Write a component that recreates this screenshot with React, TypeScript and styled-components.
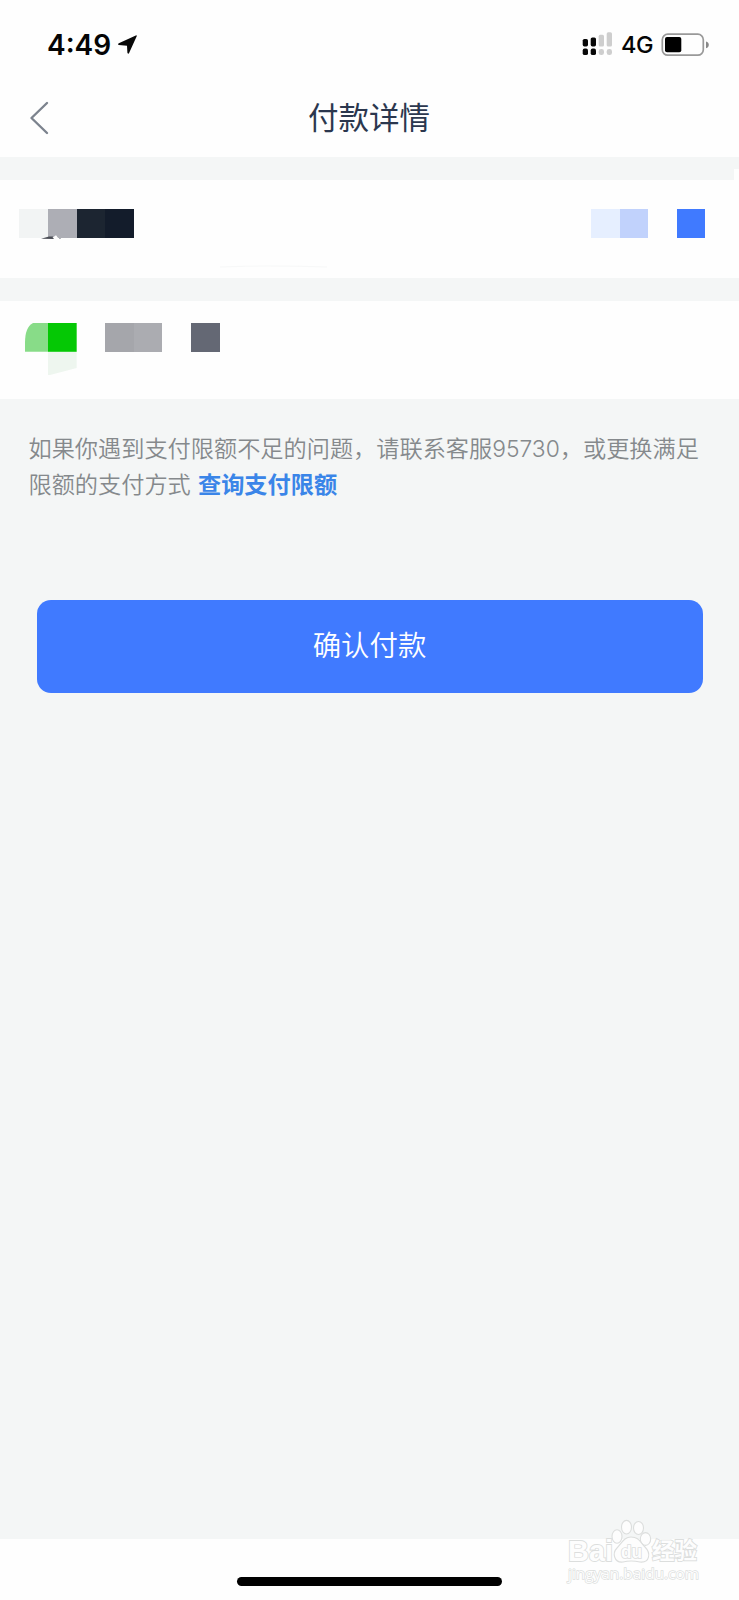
import React from "react";
import styled, { createGlobalStyle } from "styled-components";

const Global = createGlobalStyle`
  * { box-sizing: border-box; }
  body { margin: 0; background: #f4f6f6; }
`;

const cjk = `"Noto Sans CJK SC", sans-serif`;

const Screen = styled.div`
  position: relative;
  display: flex;
  flex-direction: column;
  width: 739px;
  height: 1600px;
  overflow: hidden;
  background: #f4f6f6;
  font-family: ${cjk};
`;

const Header = styled.header`
  height: 157px;
  background: #fefefe;
`;

const StatusBar = styled.div`
  display: flex;
  align-items: center;
  justify-content: space-between;
  height: 89px;
  padding: 0 30px 0 47px;
  font-family: Inter, sans-serif;
  color: #050505;
`;

const StatusGroup = styled.div<{ $gap: number }>`
  display: flex;
  align-items: center;
  gap: ${(p) => p.$gap}px;
`;

const Time = styled.span`
  font-size: 28px;
  line-height: 34px;
  font-weight: 600;
  letter-spacing: 0;
`;

const Network = styled.span`
  font-size: 23.5px;
  line-height: 30px;
  font-weight: 500;
  letter-spacing: -0.5px;
`;

const NavBar = styled.nav`
  display: grid;
  grid-template-columns: 90px 1fr 90px;
  align-items: center;
  height: 58px;
`;

const BackButton = styled.button`
  display: flex;
  padding: 0 0 0 29px;
  border: 0;
  background: none;
`;

const Title = styled.h1`
  margin: 0;
  padding: 0 1px 5px 0;
  text-align: center;
  font-size: 30.5px;
  line-height: 44px;
  font-weight: 400;
  color: #2b374e;
`;

const Card = styled.section<{ $height: number; $top: number; $left: number; $right: number }>`
  position: relative;
  display: flex;
  justify-content: space-between;
  align-items: flex-start;
  height: ${(p) => p.$height}px;
  margin-top: 23px;
  padding: ${(p) => `${p.$top}px ${p.$right}px 0 ${p.$left}px`};
  background: #fefefe;
`;

const CornerTab = styled.div`
  position: absolute;
  right: 0;
  top: -11px;
  width: 5px;
  height: 11px;
  background: #fefefe;
`;

const BlockRow = styled.div`
  display: flex;
`;

const Block = styled.div<{ $color?: string }>`
  width: 28.6px;
  height: 28.6px;
  background: ${(p) => p.$color ?? "transparent"};
`;

const Notice = styled.p`
  margin: 30px 0 0;
  padding-left: 28.5px;
  font-size: 23.2px;
  line-height: 36px;
  font-weight: 350;
  white-space: nowrap;
  color: #85898c;
`;

const Digits = styled.span`
  font-family: Inter, sans-serif;
  font-size: 22.8px;
  line-height: 1;
`;

const LimitLink = styled.a`
  margin-left: 2px;
  font-weight: 700;
  color: #3a85e8;
`;

const ConfirmButton = styled.button`
  width: 666px;
  height: 93px;
  margin: 99px 0 0 36.5px;
  padding: 0 0 6px;
  border: 0;
  border-radius: 14px;
  background: #407aff;
  color: #fff;
  font-family: ${cjk};
  font-size: 28.4px;
  font-weight: 350;
`;

const Footer = styled.footer`
  display: flex;
  justify-content: center;
  align-items: flex-start;
  height: 61px;
  margin-top: auto;
  padding-top: 38px;
  background: #fefefe;
`;

const HomeIndicator = styled.div`
  width: 265px;
  height: 9px;
  border-radius: 5px;
  background: #000;
`;

const Watermark = styled.svg`
  position: absolute;
  left: 560px;
  top: 1514px;
`;

const LocationIcon = () => (
  <svg width="20" height="20" viewBox="0 0 20 20">
    <path d="M18.7 1.2 11.1 18Q10.3 19.4 9.4 17.8L9 10.8 .8 10.1Q-.6 9.2 .8 8.2L17.8.4Q19.2.1 18.7 1.2Z" fill="#080808" />
  </svg>
);

const SignalIcon = () => (
  <svg width="31" height="25" viewBox="0 0 31 25">
    <g fill="#080808">
      <rect x="0.7" y="6.9" width="5.3" height="7.5" rx="1.7" />
      <rect x="8.7" y="5.4" width="5.3" height="9" rx="1.7" />
      <rect x="0.7" y="16.6" width="5.3" height="6.5" rx="1.9" />
      <rect x="8.7" y="16.6" width="5.3" height="6.5" rx="1.9" />
    </g>
    <g fill="#cecece">
      <rect x="16.7" y="2.7" width="5.3" height="11.7" rx="1.5" />
      <rect x="24.7" y="0.2" width="5.3" height="14.2" rx="1.5" />
      <rect x="16.7" y="17.1" width="5.3" height="6" rx="2.4" />
      <rect x="24.7" y="17.1" width="5.3" height="6" rx="2.4" />
    </g>
  </svg>
);

const BatteryIcon = () => (
  <svg width="48" height="24" viewBox="0 0 48 24">
    <rect x="1.3" y="1.2" width="41" height="21" rx="5.5" fill="none" stroke="#999" strokeWidth="1.7" />
    <rect x="4" y="4" width="16.3" height="15.3" rx="2" fill="#000" />
    <path d="M45 8.4Q47.8 9 47.8 11.8T45 15.2Z" fill="#888" />
  </svg>
);

export default function App() {
  return (
    <>
      <Global />
      <Screen>
        <Header>
          <StatusBar>
            <StatusGroup $gap={7}>
              <Time>4:49</Time>
              <LocationIcon />
            </StatusGroup>
            <StatusGroup $gap={8}>
              <SignalIcon />
              <Network>4G</Network>
              <BatteryIcon />
            </StatusGroup>
          </StatusBar>
          <NavBar>
            <BackButton aria-label="返回">
              <svg width="20" height="34" viewBox="0 0 20 34">
                <path d="M18 2 2.5 17 18 32" fill="none" stroke="#7c838e" strokeWidth="2.4" strokeLinecap="round" strokeLinejoin="round" />
              </svg>
            </BackButton>
            <Title>付款详情</Title>
          </NavBar>
        </Header>

        <Card $height={98} $top={29} $left={19} $right={33.6}>
          <CornerTab />
          <svg width="330" height="62" viewBox="0 0 330 62">
            <g shapeRendering="crispEdges">
              <path d="M0 0h29v28.6H0z" fill="#f2f4f4" />
              <path d="M29 0h29v28.6H29z" fill="#adaeb5" />
              <path d="M58 0h29v28.6H58z" fill="#1c2531" />
              <path d="M86 0h29v28.6H86z" fill="#131c2b" />
            </g>
            <path d="M22 29.8 30 27.6H34L35 30Z" fill="#4a4d55" />
            <path d="M33.5 28.8 37 26.2 40 30H36Z" fill="#fefefe" />
            <path d="m38 26.5 4 3.3M40 30l2-2" stroke="#adb0b4" strokeWidth="1" />
            <path d="M201 58q50-2 107 0" fill="none" stroke="#f7f8f8" />
          </svg>
          <BlockRow>
            <Block $color="#e6efff" />
            <Block $color="#c1d2fc" />
            <Block />
            <Block $color="#407aff" />
          </BlockRow>
        </Card>

        <Card $height={98} $top={22} $left={25} $right={0}>
          <BlockRow>
            <svg width="51.7" height="54" viewBox="0 0 51.7 54">
              <path d="M0 28.8V20Q0 4 8 0H23V28.8Z" fill="#88dc88" />
              <path d="M23 28.8H51.7V45L25 52H23Z" fill="#eef6ef" />
              <path d="M23 0H51.7V28.8H23Z" fill="#05c805" />
            </svg>
            <Block />
            <Block $color="#a5a6ab" />
            <Block $color="#abacb1" />
            <Block />
            <Block $color="#646874" />
          </BlockRow>
        </Card>

        <Notice>
          如果你遇到支付限额不足的问题，请联系客服<Digits>95730</Digits>，或更换满足
          <br />
          限额的支付方式 <LimitLink>查询支付限额</LimitLink>
        </Notice>

        <ConfirmButton>确认付款</ConfirmButton>

        <Footer>
          <HomeIndicator />
        </Footer>

        <Watermark width="150" height="76" viewBox="0 0 150 76">
          <g fill="#fdfdfd" stroke="#dcdedd" strokeWidth="1.1">
            <ellipse cx="57" cy="22.5" rx="5" ry="6.7" />
            <ellipse cx="66.5" cy="13.2" rx="5" ry="6.8" />
            <ellipse cx="78.5" cy="14" rx="5" ry="6.5" />
            <ellipse cx="85.5" cy="25" rx="5.2" ry="6.4" />
            <path d="M71 23C64 23 62 29 57 34 52 39 54 49 63 48 69 46.5 73 46.5 80 48 90 49 91 39 85 33 80 28 79 23 71 23Z" />
            <g fontFamily="Liberation Sans, sans-serif" fontWeight="700" paintOrder="stroke">
              <text x="8" y="47" fontSize="29" textLength="45" lengthAdjust="spacingAndGlyphs" strokeWidth="1.8">Bai</text>
              <text x="61" y="44" fontSize="18" textLength="21" lengthAdjust="spacingAndGlyphs" strokeWidth="1.7">du</text>
            </g>
            <text x="92" y="45" fontSize="23" textLength="45" lengthAdjust="spacingAndGlyphs" fontWeight="700" paintOrder="stroke" strokeWidth="1.8">经验</text>
            <text x="8" y="65" fontFamily="Open Sans, sans-serif" fontSize="14.5" fontWeight="400" textLength="131" lengthAdjust="spacingAndGlyphs" paintOrder="stroke" strokeWidth="1.3">jingyan.baidu.com</text>
          </g>
        </Watermark>
      </Screen>
    </>
  );
}
